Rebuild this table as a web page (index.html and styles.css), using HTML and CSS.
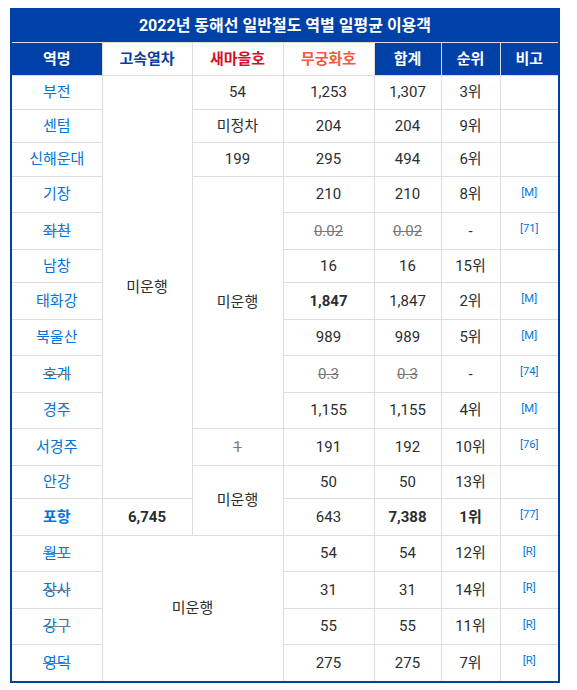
FILE: index.html
```html
<!DOCTYPE html>
<html lang="ko">
<head>
<meta charset="utf-8">
<title>2022년 동해선 일반철도 역별 일평균 이용객</title>
<link rel="stylesheet" href="styles.css">
</head>
<body>
<div class="wrap">
<table class="tbl">
<colgroup>
<col class="c1"><col class="c2"><col class="c3"><col class="c4"><col class="c5"><col class="c6"><col class="c7">
</colgroup>
<tr><td class="title" colspan="7">2022년 동해선 일반철도 역별 일평균 이용객</td></tr>
<tr class="head">
<td class="hb">역명</td>
<td class="hw ktx">고속열차</td>
<td class="hw smu">새마을호</td>
<td class="hw mgh">무궁화호</td>
<td class="hb">합계</td>
<td class="hb">순위</td>
<td class="hb">비고</td>
</tr>
<tr><td class="stn">부전</td><td rowspan="12">미운행</td><td>54</td><td>1,253</td><td>1,307</td><td>3위</td><td></td></tr>
<tr><td class="stn">센텀</td><td>미정차</td><td>204</td><td>204</td><td>9위</td><td></td></tr>
<tr><td class="stn">신해운대</td><td>199</td><td>295</td><td>494</td><td>6위</td><td></td></tr>
<tr><td class="stn">기장</td><td rowspan="7">미운행</td><td>210</td><td>210</td><td>8위</td><td><sup class="fn">[M]</sup></td></tr>
<tr><td><del class="dstn"><span class="stn">좌천</span></del></td><td><del class="dnum">0.02</del></td><td><del class="dnum">0.02</del></td><td>-</td><td><sup class="fn">[71]</sup></td></tr>
<tr><td class="stn">남창</td><td>16</td><td>16</td><td>15위</td><td></td></tr>
<tr><td class="stn">태화강</td><td><b>1,847</b></td><td>1,847</td><td>2위</td><td><sup class="fn">[M]</sup></td></tr>
<tr><td class="stn">북울산</td><td>989</td><td>989</td><td>5위</td><td><sup class="fn">[M]</sup></td></tr>
<tr><td><del class="dstn"><span class="stn">호계</span></del></td><td><del class="dnum">0.3</del></td><td><del class="dnum">0.3</del></td><td>-</td><td><sup class="fn">[74]</sup></td></tr>
<tr><td class="stn">경주</td><td>1,155</td><td>1,155</td><td>4위</td><td><sup class="fn">[M]</sup></td></tr>
<tr><td class="stn">서경주</td><td><del class="dnum">1</del></td><td>191</td><td>192</td><td>10위</td><td><sup class="fn">[76]</sup></td></tr>
<tr><td class="stn">안강</td><td rowspan="2">미운행</td><td>50</td><td>50</td><td>13위</td><td></td></tr>
<tr><td class="stn"><b>포항</b></td><td><b>6,745</b></td><td>643</td><td><b>7,388</b></td><td><b>1위</b></td><td><sup class="fn">[77]</sup></td></tr>
<tr><td><del class="dstn"><span class="stn">월포</span></del></td><td colspan="2" rowspan="4">미운행</td><td>54</td><td>54</td><td>12위</td><td><sup class="fn">[R]</sup></td></tr>
<tr><td><del class="dstn"><span class="stn">장사</span></del></td><td>31</td><td>31</td><td>14위</td><td><sup class="fn">[R]</sup></td></tr>
<tr><td><del class="dstn"><span class="stn">강구</span></del></td><td>55</td><td>55</td><td>11위</td><td><sup class="fn">[R]</sup></td></tr>
<tr><td><del class="dstn"><span class="stn">영덕</span></del></td><td>275</td><td>275</td><td>7위</td><td><sup class="fn">[R]</sup></td></tr>
</table>
</div>
</body>
</html>
```
FILE: styles.css
```css
body {
  margin: 8px 0 0 10px;
  background: #fff;
  font-family: Roboto, "Noto Sans CJK KR", sans-serif;
  font-size: 15px;
  color: #2b2e31;
}
.wrap {
  width: 546px;
  border: 2px solid #0041a8;
}
.tbl {
  width: 546px;
  border-collapse: collapse;
  border-style: hidden;
  table-layout: fixed;
}
.c1 { width: 90px; }
.c2 { width: 90px; }
.c3 { width: 91px; }
.c4 { width: 91px; }
.c5 { width: 67px; }
.c6 { width: 59px; }
.c7 { width: 58px; }
.tbl td {
  border: 1px solid #dddddd;
  padding: 5px 4px;
  text-align: center;
  vertical-align: middle;
  line-height: 22.5px;
}
.tbl td.title {
  background: #0041a8;
  color: #fff;
  font-weight: bold;
  font-size: 16px;
  line-height: 21.5px;
}
.head td { font-weight: bold; }
.tbl td.hb { background: #0041a8; color: #fff; }
.tbl td.hw { background: #fff; }
.ktx { color: #0b3f9c; }
.smu { color: #d0102c; }
.mgh { color: #f5583c; }
.stn { color: #0275d8; }
.dstn { color: #777; }
.dnum { color: #777; }
.fn {
  color: #0275d8;
  font-size: 11.25px;
  vertical-align: 5px;
  line-height: 21px;
}
b { font-weight: bold; }
```
